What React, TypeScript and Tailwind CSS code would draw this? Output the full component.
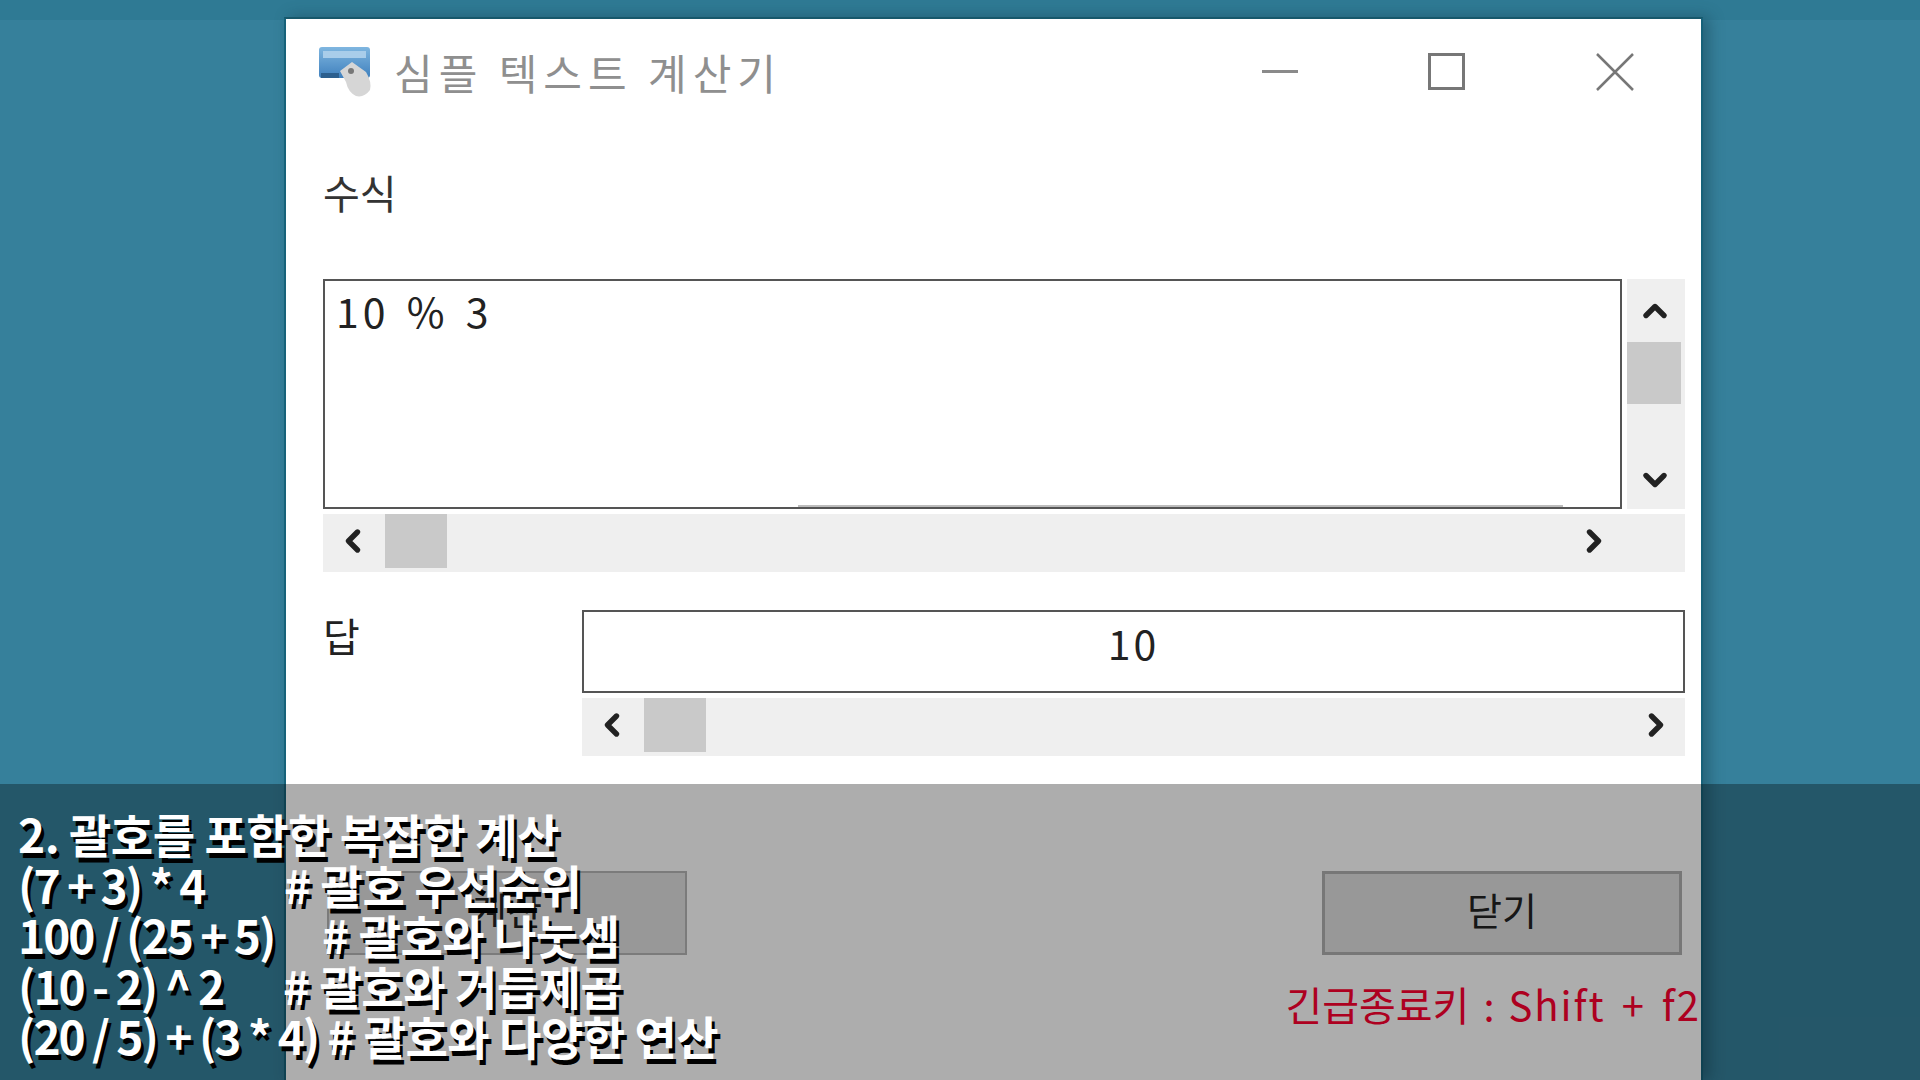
import React from "react";
import { ChevronDown, ChevronLeft, ChevronRight, ChevronUp } from "lucide-react";

const font = { fontFamily: '"Noto Sans CJK KR", "Noto Sans", sans-serif' };

function AppIcon() {
    return (
        <svg width="54" height="52" viewBox="0 0 54 52" className="shrink-0">
            <defs>
                <linearGradient id="kb" x1="0" y1="0" x2="0" y2="1">
                    <stop offset="0" stopColor="#7fb6e0" />
                    <stop offset="1" stopColor="#3f80bd" />
                </linearGradient>
            </defs>
            <rect x="1" y="1" width="51" height="31" rx="3" fill="url(#kb)" />
            <rect x="5" y="5" width="43" height="7" fill="#a9cdea" />
            <rect x="3" y="27" width="18" height="5" fill="#2c5f8e" />
            <path d="M22 25 L34 16 L48 26 Q54 36 52 44 Q46 52 38 50 Q30 46 28 36 Z" fill="#d6d6d6" />
            <circle cx="33" cy="25" r="3" fill="#777" />
        </svg>
    );
}

function ScrollBarH({ className, rightClass }: { className: string; rightClass?: string }) {
    return (
        <div className={`flex items-start bg-[#efefef] h-[58px] ${className}`}>
            <div className="w-[62px] h-[54px] pr-[3px] flex items-center justify-center shrink-0">
                <ChevronLeft size={36} strokeWidth={3.6} className="text-[#222]" />
            </div>
            <div className="w-[62px] h-[54px] bg-[#c9c9c9] shrink-0" />
            <div className="flex-1" />
            <div className={`w-[62px] h-[54px] pl-[3px] flex items-center justify-center shrink-0 ${rightClass ?? ""}`}>
                <ChevronRight size={36} strokeWidth={3.6} className="text-[#222]" />
            </div>
        </div>
    );
}

function App() {
    return (
        <div className="relative w-[1920px] h-[1080px] overflow-hidden bg-[#36809b]" style={font}>
            <div className="absolute inset-x-0 top-0 h-[20px] bg-[#2f7a94]" />

            {/* window */}
            <div className="relative ml-[284px] pt-[17px] w-[1419px] h-[1080px]">
                <div className="h-full bg-white border-t-2 border-x-2 border-t-[#17586b] border-x-[#17627a] shadow-[6px_0_14px_rgba(20,60,75,0.45)] flex flex-col">
                    <div className="flex items-center h-[84px] pl-[32px] pt-[21px]">
                        <AppIcon />
                        <span className="ml-[22px] text-[42px] leading-none tracking-[6px] text-[#8f8f8f]">심플 텍스트 계산기</span>
                        <div className="flex-1" />
                        <div className="w-[36px] h-[3px] bg-[#8a8a8a] mr-[130px]" />
                        <div className="w-[37px] h-[37px] border-[3px] border-[#777] mr-[130px]" />
                        <svg width="40" height="40" viewBox="0 0 40 40" className="mr-[66px]">
                            <path d="M2 2 L38 38 M38 2 L2 38" stroke="#777" strokeWidth="2.5" />
                        </svg>
                    </div>

                    <div className="pl-[37px] pt-[64px] pr-[16px] flex-1 flex flex-col">
                        <div className="text-[40px] leading-[50px] text-[#333]">수식</div>
                        <div className="flex mt-[62px] h-[230px]">
                            <div className="relative flex-1 border-2 border-[#555] px-[11px] pt-[4px] text-[41px] leading-[50px] tracking-[4px] [word-spacing:4px] text-[#222]">
                                10 % 3
                                <div className="absolute left-[473px] bottom-0 w-[765px] h-[2px] bg-[#bdbdbd]" />
                            </div>
                            <div className="w-[58px] ml-[5px] bg-[#efefef] flex flex-col">
                                <div className="h-[63px] pr-[3px] flex items-center justify-center">
                                    <ChevronUp size={36} strokeWidth={3.6} className="text-[#222]" />
                                </div>
                                <div className="h-[62px] w-[54px] bg-[#c9c9c9]" />
                                <div className="flex-1" />
                                <div className="h-[62px] pr-[3px] pt-[4px] flex items-center justify-center">
                                    <ChevronDown size={36} strokeWidth={3.6} className="text-[#222]" />
                                </div>
                            </div>
                        </div>
                        <ScrollBarH className="mt-[5px]" rightClass="mr-[62px]" />

                        <div className="flex mt-[38px]">
                            <div className="w-[259px] text-[40px] leading-[50px] text-[#222]">답</div>
                            <div className="flex-1">
                                <div className="h-[83px] border-2 border-[#555] flex items-center justify-center pb-[17px] text-[41px] tracking-[3px] text-[#222]">10</div>
                                <ScrollBarH className="mt-[5px]" />
                            </div>
                        </div>

                        <div className="flex mt-[115px]">
                            <div className="w-[360px] h-[84px] ml-[4px] border-2 border-[#b5b5b5] bg-[#e1e1e1] flex items-center justify-center text-[38px] text-[#222] pb-[9px]">계산</div>
                            <div className="flex-1" />
                            <div className="w-[360px] h-[84px] mr-[3px] border-[3px] border-[#b0b0b0] bg-[#e1e1e1] flex items-center justify-center text-[38px] text-[#222] pb-[9px]">닫기</div>
                        </div>
                        <div className="mt-[24px] -mr-[16px] text-right text-[40px] leading-[50px] [word-spacing:5px] text-[#ff0030]">
                            긴급종료키 : <span className="tracking-[2px]">Shift + f2</span>
                        </div>
                    </div>
                </div>
            </div>

            {/* subtitle bar */}
            <div className="absolute inset-x-0 top-[784px] bottom-0 bg-black/[0.32] pl-[18px] pt-[24px] text-[46px] leading-[50.5px] font-bold text-white tracking-[-0.5px] whitespace-pre [text-shadow:3px_5px_0_#000]">
                <div>2. 괄호를 포함한 복잡한 계산</div>
                <div><span className="tracking-[-2px]">(7 + 3) * 4</span><span className="ml-[8px] tracking-[-1.5px]">        </span># 괄호 우선순위</div>
                <div><span className="tracking-[-2px]">100 / (25 + 5)</span><span className="ml-[3px] tracking-[-1.5px]">     </span># 괄호와 나눗셈</div>
                <div><span className="tracking-[-2px]">(10 - 2) ^ 2</span><span className="ml-[6px] tracking-[-1.5px]">      </span># 괄호와 거듭제곱</div>
                <div><span className="tracking-[-2px]">(20 / 5) + (3 * 4)</span><span className="tracking-[-1.5px]"> </span># 괄호와 다양한 연산</div>
            </div>
        </div>
    );
}

export default App;
